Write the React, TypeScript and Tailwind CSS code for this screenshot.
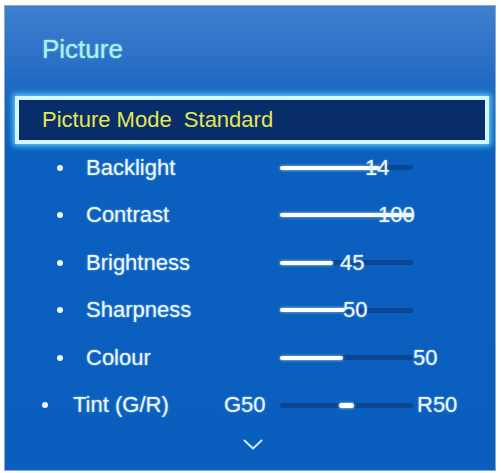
import type { CSSProperties } from "react"

type Row = {
  label: string
  value: string
  fill: number
  valueAt: number
}

const rows: Row[] = [
  { label: "Backlight", value: "14", fill: 100, valueAt: 85 },
  { label: "Contrast", value: "100", fill: 133, valueAt: 98 },
  { label: "Brightness", value: "45", fill: 53, valueAt: 60 },
  { label: "Sharpness", value: "50", fill: 65, valueAt: 63 },
  { label: "Colour", value: "50", fill: 63, valueAt: 133 },
]

const font: CSSProperties = { fontFamily: '"Liberation Sans", Arial, sans-serif' }

// soft glow the TV menu puts on its light text
const glow = "[text-shadow:0_0_2px_rgba(190,235,255,0.7)]"

function Slider({ fill, value, valueAt }: { fill: number; value: string; valueAt: number }) {
  return (
    <div className="relative h-[5px] w-[133px] rounded-full bg-[#0a4691]">
      <div
        className="absolute left-0 top-[0.5px] h-[4px] rounded-full bg-white shadow-[0_0_3px_#bfeaff]"
        style={{ width: fill }}
      />
      <span
        className={`absolute top-1/2 -translate-y-1/2 text-[22px] leading-none text-[#eef8ff] ${glow}`}
        style={{ left: valueAt }}
      >
        {value}
      </span>
    </div>
  )
}

export default function App() {
  return (
    <div className="h-[473px] w-[501px] bg-white pl-[4px] pt-[5px]" style={font}>
      <div className="flex h-[466px] w-[492px] flex-col border border-[#8ea8c6] bg-[linear-gradient(180deg,#3e7fce_0%,#2a70c6_12%,#1564c1_22%,#0b5fbe_30%,#0a5ebd_100%)]">
        <div className="h-[90px] pl-[37px] pt-[28px]">
          <h1 className={`text-[26px] leading-[30px] text-[#abf3f1] ${glow}`}>Picture</h1>
        </div>

        <div className="ml-[10px] flex h-[48px] w-[474px] items-center border-[4px] border-[#d4f6ff] bg-[#082d68] pl-[23px] shadow-[0_0_6px_2px_#5fd0ff]">
          <span className="text-[22px] leading-none text-[#e4e655]">
            Picture Mode&nbsp;&nbsp;Standard
          </span>
        </div>

        <div className="flex flex-col">
          {rows.map((row) => (
            <div key={row.label} className="flex h-[47.5px] items-center">
              <div className="ml-[52px] h-[6px] w-[6px] rounded-full bg-[#eef8ff]" />
              <span className={`ml-[23px] w-[194px] text-[22px] leading-none text-[#eef8ff] ${glow}`}>
                {row.label}
              </span>
              <Slider fill={row.fill} value={row.value} valueAt={row.valueAt} />
            </div>
          ))}

          <div className="flex h-[47.5px] items-center">
            <div className="ml-[37px] h-[6px] w-[6px] rounded-full bg-[#eef8ff]" />
            <span className={`ml-[25px] w-[151px] text-[22px] leading-none text-[#eef8ff] ${glow}`}>
              Tint (G/R)
            </span>
            <span className={`w-[56px] text-[22px] leading-none text-[#eef8ff] ${glow}`}>G50</span>
            <div className="relative h-[5px] w-[133px] rounded-full bg-[#0a4691]">
              <div className="absolute left-[59px] top-[0px] h-[5px] w-[15px] rounded-full bg-white shadow-[0_0_3px_#bfeaff]" />
            </div>
            <span className={`ml-[4px] text-[22px] leading-none text-[#eef8ff] ${glow}`}>R50</span>
          </div>
        </div>

        <div className="flex justify-center pl-[6px] pt-[10px]">
          <svg width="20" height="11" viewBox="0 0 20 11" fill="none">
            <path d="M1.5 1.5 L10 9.5 L18.5 1.5" stroke="#cdeeff" strokeWidth="2" strokeLinecap="round" strokeLinejoin="round" />
          </svg>
        </div>
      </div>
    </div>
  )
}
